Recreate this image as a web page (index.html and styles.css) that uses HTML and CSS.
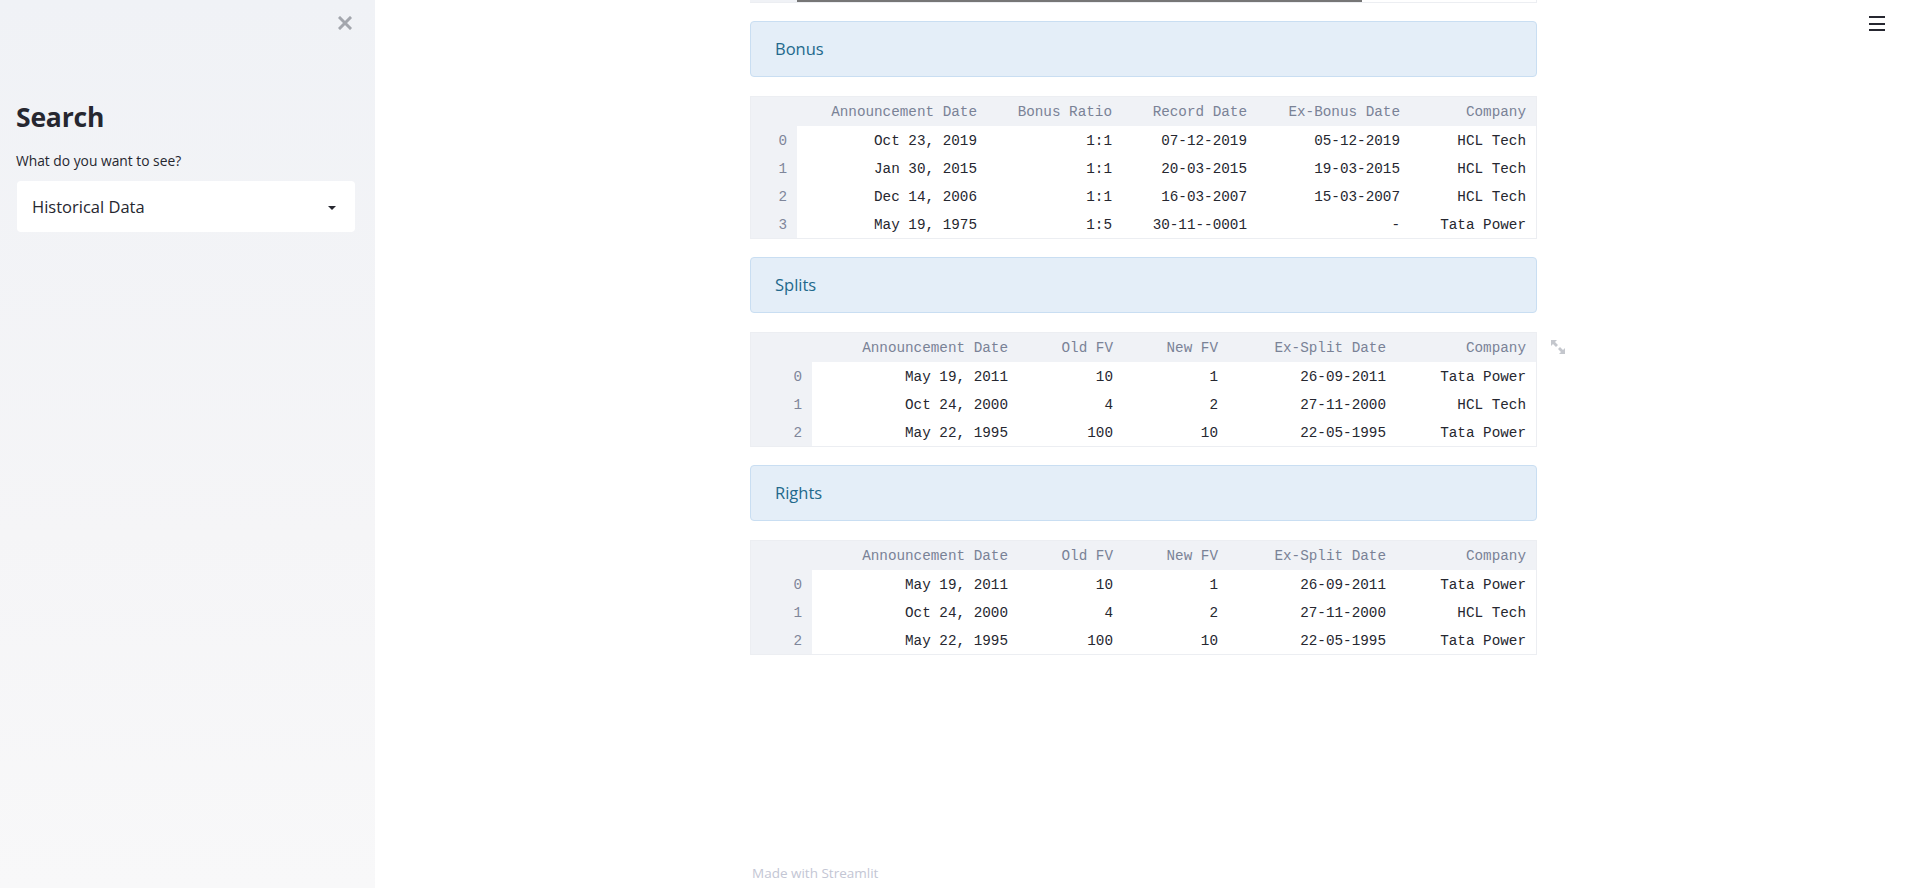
FILE: index.html
```html
<!DOCTYPE html>
<html lang="en">
<head>
<meta charset="utf-8">
<title>Streamlit</title>
<link rel="stylesheet" href="styles.css">
</head>
<body>
<div class="app">
  <aside class="sidebar">
    <div class="sidebar-top">
      <button class="close-btn" aria-label="Close sidebar">
        <svg width="14" height="14" viewBox="0 0 14 14"><path d="M2 2L12 12M12 2L2 12" stroke="#a3a6ad" stroke-width="3" stroke-linecap="square"/></svg>
      </button>
    </div>
    <h2 class="side-title">Search</h2>
    <div class="side-label">What do you want to see?</div>
    <div class="select">
      <span class="select-value">Historical Data</span>
      <span class="caret"></span>
    </div>
  </aside>

  <main class="main">
    <button class="menu-btn" aria-label="Menu"><span></span><span></span><span></span></button>
    <div class="content">
      <div class="prev-table">
        <div class="prev-idx"></div>
        <div class="prev-scroll"></div>
      </div>

      <div class="alert">Bonus</div>
      <div class="df">
        <table class="tbl">
          <colgroup>
            <col class="b-idx"><col class="b-c1"><col class="b-c2"><col class="b-c3"><col class="b-c4"><col class="b-c5">
          </colgroup>
          <thead>
            <tr><th class="idx"></th><th>Announcement Date</th><th>Bonus Ratio</th><th>Record Date</th><th>Ex-Bonus Date</th><th>Company</th></tr>
          </thead>
          <tbody>
            <tr><td class="idx">0</td><td>Oct 23, 2019</td><td>1:1</td><td>07-12-2019</td><td>05-12-2019</td><td>HCL Tech</td></tr>
            <tr><td class="idx">1</td><td>Jan 30, 2015</td><td>1:1</td><td>20-03-2015</td><td>19-03-2015</td><td>HCL Tech</td></tr>
            <tr><td class="idx">2</td><td>Dec 14, 2006</td><td>1:1</td><td>16-03-2007</td><td>15-03-2007</td><td>HCL Tech</td></tr>
            <tr><td class="idx">3</td><td>May 19, 1975</td><td>1:5</td><td>30-11--0001</td><td>-</td><td>Tata Power</td></tr>
          </tbody>
        </table>
      </div>

      <div class="alert">Splits</div>
      <div class="df">
        <table class="tbl">
          <colgroup>
            <col class="s-idx"><col class="s-c1"><col class="s-c2"><col class="s-c3"><col class="s-c4"><col class="s-c5">
          </colgroup>
          <thead>
            <tr><th class="idx"></th><th>Announcement Date</th><th>Old FV</th><th>New FV</th><th>Ex-Split Date</th><th>Company</th></tr>
          </thead>
          <tbody>
            <tr><td class="idx">0</td><td>May 19, 2011</td><td>10</td><td>1</td><td>26-09-2011</td><td>Tata Power</td></tr>
            <tr><td class="idx">1</td><td>Oct 24, 2000</td><td>4</td><td>2</td><td>27-11-2000</td><td>HCL Tech</td></tr>
            <tr><td class="idx">2</td><td>May 22, 1995</td><td>100</td><td>10</td><td>22-05-1995</td><td>Tata Power</td></tr>
          </tbody>
        </table>
        <span class="expand" aria-label="View fullscreen">
          <svg width="16" height="16" viewBox="0 0 16 16"><path d="M1 1h6L5 3l3 3-2 2-3-3-2 2z" fill="#c4c7cd"/><path d="M15 15H9l2-2-3-3 2-2 3 3 2-2z" fill="#c4c7cd"/></svg>
        </span>
      </div>

      <div class="alert">Rights</div>
      <div class="df">
        <table class="tbl">
          <colgroup>
            <col class="s-idx"><col class="s-c1"><col class="s-c2"><col class="s-c3"><col class="s-c4"><col class="s-c5">
          </colgroup>
          <thead>
            <tr><th class="idx"></th><th>Announcement Date</th><th>Old FV</th><th>New FV</th><th>Ex-Split Date</th><th>Company</th></tr>
          </thead>
          <tbody>
            <tr><td class="idx">0</td><td>May 19, 2011</td><td>10</td><td>1</td><td>26-09-2011</td><td>Tata Power</td></tr>
            <tr><td class="idx">1</td><td>Oct 24, 2000</td><td>4</td><td>2</td><td>27-11-2000</td><td>HCL Tech</td></tr>
            <tr><td class="idx">2</td><td>May 22, 1995</td><td>100</td><td>10</td><td>22-05-1995</td><td>Tata Power</td></tr>
          </tbody>
        </table>
      </div>
    </div>
    <footer class="footer">Made with Streamlit</footer>
  </main>
</div>
</body>
</html>
```

FILE: styles.css
```css
* { box-sizing: border-box; }

html, body {
  margin: 0;
  padding: 0;
  height: 100%;
  background: #ffffff;
  font-family: "Open Sans", "Noto Sans", sans-serif;
  color: #262730;
}

.app {
  display: flex;
  height: 888px;
  overflow: hidden;
}

/* Sidebar */
.sidebar {
  width: 375px;
  flex: 0 0 375px;
  height: 100%;
  background: linear-gradient(180deg, #f0f2f6 0%, #f5f5f7 60%, #f8f8f9 100%);
  padding: 0 20px 0 16px;
  display: flex;
  flex-direction: column;
}

.sidebar-top {
  display: flex;
  justify-content: flex-end;
  padding-top: 16px;
  margin-right: 3px;
  height: 101px;
}

.close-btn {
  border: 0;
  background: transparent;
  padding: 0;
  width: 14px;
  height: 14px;
  display: flex;
  cursor: pointer;
}

.side-title {
  margin: 0;
  font-size: 26.5px;
  line-height: 33.6px;
  font-weight: 700;
  color: #262730;
  letter-spacing: -0.2px;
}

.side-label {
  margin-top: 16px;
  font-size: 13.8px;
  line-height: 20px;
  color: #262730;
}

.select {
  margin-top: 10px;
  margin-left: 1px;
  width: 338px;
  height: 51px;
  background: #ffffff;
  border-radius: 4px;
  display: flex;
  align-items: center;
  justify-content: space-between;
  padding: 0 19px 0 15px;
}

.select-value {
  font-size: 16.5px;
  line-height: 24px;
  color: #262730;
  padding-top: 2px;
}

.caret {
  width: 0;
  height: 0;
  border-left: 4px solid transparent;
  border-right: 4px solid transparent;
  border-top: 4px solid #262730;
  margin-top: 3px;
}

/* Main */
.main {
  flex: 1;
  height: 100%;
  display: flex;
  flex-direction: column;
  align-items: center;
  padding-left: 4px;
}

.menu-btn {
  position: absolute;
  top: 16px;
  right: 23px;
  width: 16px;
  height: 15px;
  border: 0;
  background: transparent;
  padding: 0;
  display: flex;
  flex-direction: column;
  justify-content: space-between;
  cursor: pointer;
}

.menu-btn span {
  display: block;
  height: 2px;
  width: 16px;
  background: #262730;
}

.content {
  width: 787px;
  display: flex;
  flex-direction: column;
}

.prev-table {
  height: 3px;
  display: flex;
  border-bottom: 1px solid #eceef2;
  border-right: 1px solid #eceef2;
  margin-bottom: 18px;
}

.prev-idx {
  width: 47px;
  background: #f0f2f6;
}

.prev-scroll {
  width: 565px;
  height: 2px;
  background: #767676;
}

.alert {
  height: 56px;
  background: #e4eef8;
  border: 1px solid #c9def2;
  border-radius: 4px;
  padding: 15px 24px;
  font-size: 16.5px;
  line-height: 24px;
  color: #22698c;
  margin-bottom: 19px;
}

.df {
  position: relative;
  border: 1px solid #eceef2;
  margin-bottom: 18px;
}

.tbl {
  width: 100%;
  table-layout: fixed;
  border-collapse: collapse;
  font-family: "Liberation Mono", "DejaVu Sans Mono", monospace;
  font-size: 14.3px;
}

.tbl th, .tbl td {
  text-align: right;
  padding: 0 10px 0 0;
  white-space: nowrap;
  overflow: hidden;
}

.tbl th {
  height: 29px;
  background: #f0f2f6;
  font-weight: 400;
  color: #7a8296;
  padding-top: 1px;
}

.tbl td {
  height: 28px;
  color: #262730;
  padding-top: 2px;
}

.tbl td.idx {
  background: #f0f2f6;
  color: #7f869a;
}

.b-idx { width: 46px; }
.b-c1 { width: 190px; }
.b-c2 { width: 135px; }
.b-c3 { width: 135px; }
.b-c4 { width: 153px; }
.b-c5 { width: 126px; }

.s-idx { width: 61px; }
.s-c1 { width: 206px; }
.s-c2 { width: 105px; }
.s-c3 { width: 105px; }
.s-c4 { width: 168px; }
.s-c5 { width: 140px; }

.expand {
  position: absolute;
  top: 6px;
  left: calc(100% + 14px);
  width: 16px;
  height: 16px;
  display: flex;
}

.footer {
  margin-top: auto;
  width: 787px;
  padding: 0 0 5px 2px;
  font-size: 13.5px;
  line-height: 20px;
  color: #c3c6d4;
}
```
